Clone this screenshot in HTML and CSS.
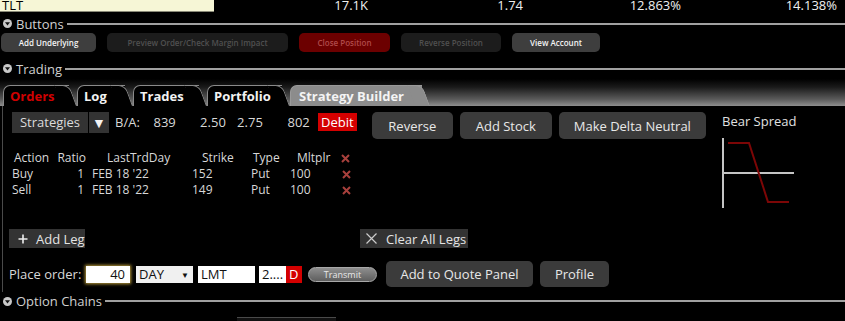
FILE: index.html
```html
<!DOCTYPE html>
<html lang="en">
<head>
    <meta charset="UTF-8">
    <meta name="viewport" content="width=device-width, initial-scale=1.0">
    <title>Strategy Builder</title>
    <link rel="stylesheet" href="styles.css">
</head>
<body>
    <!-- Quote line -->
    <div class="ticker">
        <div class="symbol">TLT</div>
        <div class="quote">17.1K</div>
        <div class="quote">1.74</div>
        <div class="quote">12.863%</div>
        <div class="quote">14.138%</div>
    </div>

    <!-- Buttons section -->
    <div class="section section-buttons">
        <svg class="toggle" width="9" height="9" viewBox="0 0 9 9"><circle cx="4.5" cy="4.5" r="4.5" fill="#c8c8c8"/><path d="M2 3.2h5L4.5 6.6z" fill="#111"/></svg>
        <span class="section-title">Buttons</span>
        <span class="rule"></span>
    </div>
    <div class="tool-row">
        <button class="tool tool-on w-add">Add Underlying</button>
        <button class="tool tool-off w-preview">Preview Order/Check Margin Impact</button>
        <button class="tool tool-red w-close">Close Position</button>
        <button class="tool tool-off w-reverse">Reverse Position</button>
        <button class="tool tool-on w-account">View Account</button>
    </div>

    <!-- Trading section -->
    <div class="section section-trading">
        <svg class="toggle" width="9" height="9" viewBox="0 0 9 9"><circle cx="4.5" cy="4.5" r="4.5" fill="#c8c8c8"/><path d="M2 3.2h5L4.5 6.6z" fill="#111"/></svg>
        <span class="section-title">Trading</span>
        <span class="rule"></span>
    </div>
    <div class="tabstrip">
        <div class="tab tab-orders">Orders</div>
        <div class="tab tab-log">Log</div>
        <div class="tab tab-trades">Trades</div>
        <div class="tab tab-portfolio">Portfolio</div>
        <div class="tab tab-builder">Strategy Builder</div>
    </div>

    <div class="panel">
        <div class="main">
            <div class="strategy-row">
                <div class="pick">Strategies</div>
                <div class="pick pick-arrow">&#9660;</div>
                <span class="ba-label">B/A:</span>
                <span class="ba f1">839</span>
                <span class="ba f2">2.50</span>
                <span class="ba f3">2.75</span>
                <span class="ba f4">802</span>
                <span class="debit">Debit</span>
                <button class="action w-rev">Reverse</button>
                <button class="action w-stock">Add Stock</button>
                <button class="action w-delta">Make Delta Neutral</button>
            </div>

            <div class="legs">
                <div class="leg leg-head">
                    <span class="c1">Action</span>
                    <span class="c2">Ratio</span>
                    <span class="c3">LastTrdDay</span>
                    <span class="c4">Strike</span>
                    <span class="c5">Type</span>
                    <span class="c6">Mltplr</span>
                    <span class="c7"><svg width="9" height="9" viewBox="0 0 9 9"><path d="M1 1l7 7M8 1l-7 7" stroke="#a8403c" stroke-width="2"/></svg></span>
                </div>
                <div class="leg">
                    <span class="c1">Buy</span>
                    <span class="c2">1</span>
                    <span class="c3">FEB 18 '22</span>
                    <span class="c4">152</span>
                    <span class="c5">Put</span>
                    <span class="c6">100</span>
                    <span class="c7"><svg width="9" height="9" viewBox="0 0 9 9"><path d="M1 1l7 7M8 1l-7 7" stroke="#a8403c" stroke-width="2"/></svg></span>
                </div>
                <div class="leg">
                    <span class="c1">Sell</span>
                    <span class="c2">1</span>
                    <span class="c3">FEB 18 '22</span>
                    <span class="c4">149</span>
                    <span class="c5">Put</span>
                    <span class="c6">100</span>
                    <span class="c7"><svg width="9" height="9" viewBox="0 0 9 9"><path d="M1 1l7 7M8 1l-7 7" stroke="#a8403c" stroke-width="2"/></svg></span>
                </div>
            </div>

            <div class="leg-tools">
                <button class="flat w-addleg">
                    <svg width="10" height="10" viewBox="0 0 10 10"><path d="M5 0.5v9M0.5 5h9" stroke="#eee" stroke-width="1.6"/></svg>
                    Add Leg
                </button>
                <button class="flat w-clear">
                    <svg width="11" height="11" viewBox="0 0 11 11"><path d="M0.5 0.5l10 10M10.5 0.5l-10 10" stroke="#ccc" stroke-width="1.2"/></svg>
                    Clear All Legs
                </button>
            </div>

            <div class="order-row">
                <span class="order-label">Place order:</span>
                <div class="field qty">40</div>
                <div class="field tif">DAY <span class="caret">&#9660;</span></div>
                <div class="field otype">LMT</div>
                <div class="field price">2....</div>
                <div class="field dflag">D</div>
                <div class="transmit">Transmit</div>
                <button class="action w-quote">Add to Quote Panel</button>
                <button class="action w-profile">Profile</button>
            </div>
        </div>

        <div class="diagram">
            <div class="diagram-title">Bear Spread</div>
            <svg width="76" height="74" viewBox="0 0 76 74">
                <path d="M1 2v70M1 37h71" stroke="#c4c4c4" stroke-width="2" fill="none"/>
                <path d="M6 7h21l19 59h21" stroke="#7c0606" stroke-width="2" fill="none"/>
            </svg>
        </div>
    </div>

    <!-- Option chains section -->
    <div class="section section-chains">
        <svg class="toggle" width="9" height="9" viewBox="0 0 9 9"><circle cx="4.5" cy="4.5" r="4.5" fill="#c8c8c8"/><path d="M2 3.2h5L4.5 6.6z" fill="#111"/></svg>
        <span class="section-title">Option Chains</span>
        <span class="rule"></span>
    </div>
    <div class="chain-stub"></div>
</body>
</html>
```

FILE: styles.css
```css
body, html {
    margin: 0;
    background: #000;
    font-family: "Open Sans", Arial, sans-serif;
    color: #d8d8d8;
    overflow: hidden;
}
button {
    font-family: inherit;
    border: none;
    padding: 0;
    cursor: pointer;
    white-space: nowrap;
}

/* quote line */
.ticker {
    display: grid;
    grid-template-columns: 214px 154px 155px 158px 156px;
    height: 12px;
    font-size: 13px;
    line-height: 11px;
    color: #f0f0f0;
}
.symbol {
    background: #f6f6d6;
    color: #000;
    padding-left: 2px;
    border-bottom: 1px solid #8a8a78;
    height: 11px;
    line-height: 11px;
}
.quote {
    text-align: right;
}

/* section headers */
.section {
    display: flex;
    align-items: center;
    padding-left: 3px;
}
.section-buttons {
    margin-top: 2px;
    height: 19px;
}
.section-trading {
    margin-top: 6px;
    height: 21px;
}
.section-chains {
    height: 18px;
}
.section-title {
    font-size: 13px;
    color: #d0d0d0;
    margin-left: 4px;
}
.rule {
    flex: 1;
    height: 2px;
    background: #a0a0a0;
    margin-left: 3px;
}

/* small toolbar */
.tool-row {
    display: flex;
    gap: 11px;
    padding-left: 1px;
    height: 19px;
}
.tool {
    height: 19px;
    border-radius: 5px;
    font-size: 8px;
    font-weight: 600;
}
.tool-on { background: #3e3e3e; color: #f4f4f4; }
.tool-off { background: #1c1c1c; color: #505050; }
.tool-red { background: #6c0000; color: #b04a4a; }
.w-add { width: 95px; }
.w-preview { width: 181px; }
.w-close { width: 91px; }
.w-reverse { width: 100px; }
.w-account { width: 88px; }

/* tabs */
.tabstrip {
    display: flex;
    align-items: flex-end;
    height: 27px;
    padding-left: 3px;
    background: linear-gradient(#000 0%, #1a1a1a 30%, #5a5a5a 75%, #8e8e8e 100%);
}
.tab {
    position: relative;
    height: 21px;
    line-height: 20px;
    margin-right: 8px;
    padding-left: 6px;
    box-sizing: border-box;
    background: #000;
    border-top: 1px solid #8a8a8a;
    border-left: 1px solid #8a8a8a;
    border-top-left-radius: 7px;
    font-size: 13px;
    font-weight: 700;
    color: #f2f2f2;
}
.tab::after {
    content: '';
    position: absolute;
    top: -1px;
    bottom: 0;
    right: -8px;
    width: 14px;
    background: inherit;
    border-top: 1px solid #8a8a8a;
    border-right: 1px solid #8a8a8a;
    border-top-right-radius: 7px;
    transform: skewX(20deg);
    transform-origin: bottom;
}
.tab-orders { width: 66px; color: #d00000; }
.tab-log { width: 48px; }
.tab-trades { width: 66px; }
.tab-portfolio { width: 75px; }
.tab-builder {
    width: 132px;
    background: #8c8c8c;
    color: #f4f4f4;
    padding-left: 8px;
    border-color: #9a9a9a;
}
.tab-builder::after { border-color: #9a9a9a; }

/* strategy panel */
.panel {
    display: grid;
    grid-template-columns: 713px 1fr;
    height: 186px;
    box-sizing: border-box;
    margin-left: 2px;
    padding: 6px 0 0 6px;
    border-left: 1px solid #4a4a4a;
}
.strategy-row {
    display: flex;
    align-items: flex-start;
    height: 27px;
    margin-left: 3px;
    font-size: 13px;
}
.pick {
    width: 76px;
    height: 21px;
    line-height: 21px;
    background: #333;
    text-align: center;
    color: #dcdcdc;
}
.pick-arrow {
    width: 20px;
    margin-left: 1px;
    font-size: 14px;
    color: #f4f4f4;
}
.ba-label {
    margin-left: 6px;
    line-height: 21px;
}
.ba {
    line-height: 21px;
    text-align: right;
}
.f1 { width: 36px; }
.f2 { width: 50px; }
.f3 { width: 37px; }
.f4 { width: 47px; }
.debit {
    margin: 1px 0 0 8px;
    width: 39px;
    height: 18px;
    line-height: 18px;
    background: #d40000;
    color: #fff;
    text-align: center;
}
.action {
    height: 27px;
    border-radius: 5px;
    background: #3b3b3b;
    color: #e8e8e8;
    font-size: 13px;
}
.w-rev { width: 81px; margin-left: 15px; }
.w-stock { width: 92px; margin-left: 7px; }
.w-delta { width: 147px; margin-left: 7px; }

/* legs table */
.legs {
    margin: 11px 0 0 3px;
    font-size: 12px;
}
.leg {
    display: grid;
    grid-template-columns: 40px 36px 102px 55px 45px 48px 17px;
    height: 16px;
    line-height: 16px;
}
.leg svg { vertical-align: -1px; }
.c2 { text-align: right; padding-right: 4px; }
.c3 { padding-left: 4px; }
.c4 { padding-left: 2px; }
.c5 { padding-left: 6px; }
.c7 { padding-left: 4px; }
.leg-head .c1 { padding-left: 2px; }
.leg-head .c2 { padding-right: 2px; }
.leg-head .c3 { padding-left: 19px; }
.leg-head .c4 { padding-left: 12px; }
.leg-head .c5 { padding-left: 8px; }
.leg-head .c6 { padding-left: 7px; }
.leg-head .c7 { padding-left: 3px; }

/* add / clear legs */
.leg-tools {
    display: flex;
    margin-top: 31px;
    height: 19px;
}
.flat {
    display: flex;
    align-items: center;
    gap: 8px;
    height: 19px;
    background: #333;
    color: #e4e4e4;
    font-size: 13px;
    padding-left: 9px;
}
.w-addleg { width: 76px; }
.w-clear { width: 108px; margin-left: 275px; padding-left: 6px; gap: 9px; }

/* order line */
.order-row {
    display: flex;
    align-items: center;
    margin-top: 13px;
    height: 26px;
    font-size: 13px;
}
.order-label { width: 77px; }
.field {
    height: 17px;
    line-height: 17px;
    background: #fff;
    color: #111;
    box-sizing: border-box;
    padding-left: 3px;
}
.qty {
    width: 44px;
    text-align: right;
    padding-right: 5px;
    box-shadow: 0 0 3px 1px #b89a3a;
}
.tif {
    width: 57px;
    margin-left: 6px;
    background: #f0f0f0;
    display: flex;
    justify-content: space-between;
    padding-right: 4px;
}
.caret { font-size: 8px; }
.otype { width: 57px; margin-left: 5px; }
.price { width: 27px; margin-left: 4px; }
.dflag {
    width: 16px;
    background: #d40000;
    color: #fff;
    padding-left: 3px;
}
.transmit {
    width: 69px;
    height: 15px;
    line-height: 13px;
    margin-left: 6px;
    box-sizing: border-box;
    border: 1px solid #a8a8a8;
    border-radius: 8px;
    background: linear-gradient(#8e8e8e, #5e5e5e);
    color: #e8e8e8;
    font-size: 9px;
    text-align: center;
}
.w-quote { width: 147px; margin-left: 9px; height: 26px; }
.w-profile { width: 69px; margin-left: 7px; height: 26px; }

/* payoff diagram */
.diagram-title {
    font-size: 13px;
    line-height: 18px;
    color: #e0e0e0;
}
.diagram svg {
    display: block;
    margin-top: 6px;
}

.chain-stub {
    width: 99px;
    height: 4px;
    margin: 7px 0 0 237px;
    background: #111;
    border-top: 1px solid #4a4a4a;
}
```
